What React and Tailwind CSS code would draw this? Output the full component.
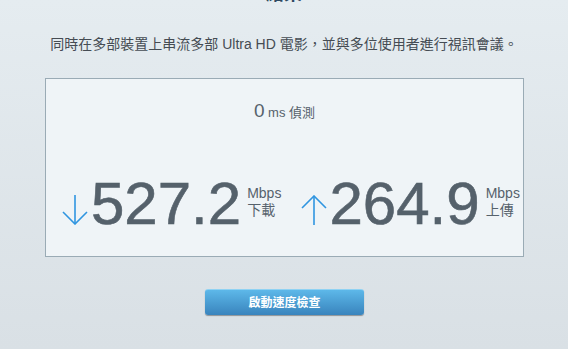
const Arrow = ({ up }) => (
  <svg width="26" height="30" viewBox="0 0 26 30" className="shrink-0 mt-[21px]" fill="none" stroke="#2f95e0" strokeWidth="1.6">
    {up ? (
      <>
        <line x1="13" y1="1" x2="13" y2="30" />
        <polyline points="1,13 13,1 25,13" />
      </>
    ) : (
      <>
        <line x1="13" y1="0" x2="13" y2="29" />
        <polyline points="1,17 13,29 25,17" />
      </>
    )}
  </svg>
);

const Speed = ({ up, value, label }) => (
  <div className="flex items-start pl-[16px]">
    <Arrow up={up} />
    <div className="ml-[3px] text-[60px] leading-[60px] text-[#55616b] [-webkit-text-stroke:0.6px_#55616b]">{value}</div>
    <div className="ml-[6px] mt-[11px] text-[14px] leading-[17px] text-[#56626c]">
      <div>Mbps</div>
      <div>{label}</div>
    </div>
  </div>
);

export default function App() {
  return (
    <div className="w-[568px] h-[349px] overflow-hidden bg-gradient-to-b from-[#e5ecf0] to-[#d9e0e5] font-['Liberation_Sans','Noto_Sans_CJK_TC',sans-serif]">
      <div className="-mt-[16px] text-center text-[18px] leading-[20px] font-bold text-[#2f4a63]">結果</div>

      <p className="mt-[30px] text-center text-[14px] leading-[20px] text-[#454c53]">
        同時在多部裝置上串流多部 Ultra HD 電影，並與多位使用者進行視訊會議。
      </p>

      <div className="mt-[24px] ml-[45px] w-[479px] h-[179px] border border-[#9aabb5] bg-[#eff4f7]">
        <div className="pt-[20px] text-center leading-[24px] text-[#56626c]">
          <span className="text-[19px]">0</span>
          <span className="text-[13px]"> ms 偵測</span>
        </div>
        <div className="mt-[49px] grid grid-cols-2">
          <Speed value="527.2" label="下載" />
          <Speed up value="264.9" label="上傳" />
        </div>
      </div>

      <div className="mt-[32px] flex justify-center">
        <button className="ml-[1px] w-[159px] h-[26px] rounded-[3px] bg-gradient-to-b from-[#5db8e9] to-[#3984bd] border-t border-[#8fd2f3] shadow-[0_1px_1px_rgba(0,0,0,0.35)] text-white text-[12px] font-bold leading-[24px]">
          啟動速度檢查
        </button>
      </div>
    </div>
  );
}
